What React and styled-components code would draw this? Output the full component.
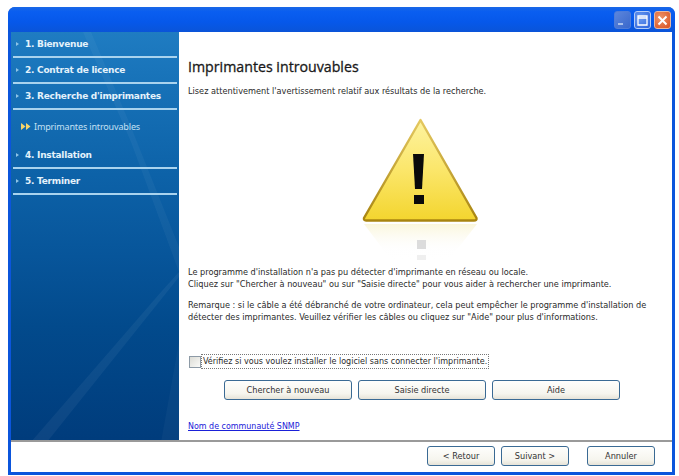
import styled, { createGlobalStyle } from 'styled-components';

const Global = createGlobalStyle`
  html, body { margin: 0; padding: 0; background: #fff; }
  body { font-family: 'Liberation Sans', Arial, sans-serif; }
`

const Window = styled.div`
  width: 667px;
  height: 468px;
  margin: 7px 0 0 8px;
  display: flex;
  flex-direction: column;
  box-sizing: border-box;
  background: #0b55dc;
  border-radius: 7px 7px 0 0;
  padding: 0 3px 3px 3px;
`

const TitleBar = styled.div`
  height: 25px;
  margin: 0 -3px;
  padding: 4px 4px 0 0;
  box-sizing: border-box;
  display: flex;
  justify-content: flex-end;
  gap: 3px;
  border-radius: 7px 7px 0 0;
  background: linear-gradient(180deg, #1a68e6 0%, #0a5ef0 18%, #0658ea 60%, #0a54d8 100%);
`

const CaptionButton = styled.div`
  width: 17px;
  height: 18px;
  box-sizing: border-box;
  border-radius: 3px;
  border: 1px solid ${p => p.$close ? '#e8b8a0' : p.$faded ? '#4f7cd8' : '#b4ccf6'};
  background: ${p => p.$close
    ? 'radial-gradient(circle at 35% 35%, #ee9468, #d8501f)'
    : p.$faded
      ? 'linear-gradient(135deg, #5c86dc, #3a68cc)'
      : 'radial-gradient(circle at 35% 35%, #6c9cf0, #2a62dc)'};
  display: flex;
  align-items: center;
  justify-content: center;
`

const Body = styled.div`
  flex: 1;
  display: flex;
  min-height: 0;
`

const Sidebar = styled.nav`
  position: relative;
  width: 168px;
  flex: none;
  overflow: hidden;
  background: linear-gradient(180deg, #1f7cc2 0%, #1670b6 15%, #0d62a8 35%, #07559a 55%, #024a8c 72%, #003c7c 100%);
`

const Streaks = styled.svg`
  position: absolute;
  left: 0;
  top: 0;
`

const NavItem = styled.div`
  position: relative;
  height: 26px;
  margin: 0 2px;
  padding-left: 12px;
  box-sizing: border-box;
  display: flex;
  align-items: center;
  border-bottom: 2px solid #a9d3ee;
  color: #e4f2fb;
  font-family: 'DejaVu Sans', Verdana, sans-serif;
  font-weight: bold;
  font-size: 9px;
  letter-spacing: -0.25px;
  white-space: nowrap;

  &::before {
    content: '';
    position: absolute;
    left: 3px;
    top: 10px;
    border-left: 3px solid #8fc4e6;
    border-top: 2.5px solid transparent;
    border-bottom: 2.5px solid transparent;
  }
`

const SubItem = styled.div`
  position: relative;
  height: 33px;
  padding-left: 10px;
  display: flex;
  align-items: center;
  gap: 3px;
  color: #c4e0f3;
  font-family: 'Noto Sans', Tahoma, sans-serif;
  font-size: 9px;
  letter-spacing: -0.15px;
  white-space: nowrap;
`

const Main = styled.main`
  flex: 1;
  background: #fff;
  padding: 25px 0 0 9px;
  display: flex;
  flex-direction: column;
  align-items: flex-start;
  color: #2a2a2a;
  font-family: 'DejaVu Sans Condensed', 'Noto Sans', Tahoma, sans-serif;
  font-size: 9.1px;
`

const Title = styled.h1`
  margin: 0;
  font-family: 'Open Sans', Tahoma, sans-serif;
  font-weight: 400;
  font-size: 14.2px;
  line-height: 20px;
  color: #1a1a1a;
  -webkit-text-stroke: 0.3px #1a1a1a;
`

const Lead = styled.p`
  margin: 8px 0 0;
  line-height: 13px;
`

const Art = styled.svg`
  margin: 16px 0 0 167px;
  flex: none;
  display: block;
`

const Paragraph = styled.p`
  margin: ${p => p.$top}px 0 0;
  line-height: 12px;
  white-space: nowrap;
`

const CheckRow = styled.label`
  margin-top: 32px;
  display: flex;
  align-items: center;
  gap: 1px;
  margin-left: 1px;
  font-size: 8.95px;
`

const CheckBox = styled.span`
  width: 12px;
  height: 12px;
  box-sizing: border-box;
  border: 1px solid #8d9aa6;
  background: linear-gradient(135deg, #dcdcd6, #fafaf8);
`

const CheckLabel = styled.span`
  padding: 1px;
  outline: 1px dotted #777;
  line-height: 11px;
`

const ButtonRow = styled.div`
  margin: 12px 0 0 36px;
  display: flex;
  gap: 6px;
`

const Button = styled.button`
  width: ${p => p.$w || 128}px;
  height: 20px;
  padding: 0;
  box-sizing: border-box;
  border: 1px solid #3a6a94;
  border-radius: 3px;
  background: linear-gradient(180deg, #fefefc 0%, #f6f5ee 70%, #e6e3d8 100%);
  color: #333;
  font-family: 'DejaVu Sans Condensed', 'Noto Sans', Tahoma, sans-serif;
  font-size: 9.1px;
`

const Link = styled.a`
  margin-top: 20px;
  color: #1a20d8;
  text-decoration: underline;
  font-size: 8.85px;
  line-height: 12px;
`

const Footer = styled.footer`
  height: 32px;
  flex: none;
  background: #fff;
  border-top: 2px solid #9a9a9a;
  box-sizing: border-box;
  display: flex;
  align-items: center;
  justify-content: flex-end;
  padding: 0 17px 3px 0;
`

const FooterGap = styled.span`
  width: ${p => p.$w}px;
`

const steps = ['1. Bienvenue', '2. Contrat de licence', "3. Recherche d'imprimantes"]
const later = ['4. Installation', '5. Terminer']

function Sky() {
  return (
    <Streaks width="168" height="410" viewBox="0 0 168 410">
      <path d="M72 0 L120 110 L168 240 L168 215 L118 90 L80 0Z" fill="#fff" opacity="0.04" />
      <path d="M20 410 L150 260 L168 240 L168 245 L36 410Z" fill="#fff" opacity="0.05" />
      <path d="M150 410 L168 310 L168 410Z" fill="#fff" opacity="0.03" />
    </Streaks>
  )
}

function Warning() {
  return (
    <Art width="130" height="147" viewBox="355 115 130 147">
      <defs>
        <linearGradient id="fill" x1="0" y1="0" x2="0" y2="1">
          <stop offset="0" stopColor="#fdf3a0" />
          <stop offset="0.5" stopColor="#fbe66a" />
          <stop offset="1" stopColor="#f3d52e" />
        </linearGradient>
        <linearGradient id="edge" x1="0" y1="0" x2="0" y2="1">
          <stop offset="0" stopColor="#e4c860" />
          <stop offset="1" stopColor="#a88410" />
        </linearGradient>
        <linearGradient id="fade" x1="0" y1="0" x2="0" y2="1">
          <stop offset="0" stopColor="#f6eeb8" stopOpacity="0.5" />
          <stop offset="0.7" stopColor="#fafafa" stopOpacity="0.1" />
          <stop offset="1" stopColor="#fff" stopOpacity="0" />
        </linearGradient>
      </defs>
      <path d="M364 225 H477 L448 262 H392Z" fill="url(#fade)" />
      <rect x="417" y="241" width="9" height="9" fill="#dcdcdc" />
      <rect x="417" y="256" width="9" height="5" fill="#efefef" />
      <path d="M420.5 121 L476.5 219 Q477 221.5 474 221.5 H366 Q363.5 221.5 364 219 L420.5 121Z"
        fill="url(#fill)" stroke="url(#edge)" strokeWidth="2.4" strokeLinejoin="round" />
      <path d="M413 155 H424 L422 190 H415Z" fill="#0a0a0a" />
      <rect x="414" y="196" width="10" height="9" fill="#0a0a0a" />
    </Art>
  )
}

function App() {
  return (
    <>
      <Global />
      <Window>
        <TitleBar>
          <CaptionButton $faded>
            <svg width="11" height="11" viewBox="0 0 11 11"><rect x="1" y="8" width="5" height="2" fill="#a8c0ec" /></svg>
          </CaptionButton>
          <CaptionButton>
            <svg width="11" height="11" viewBox="0 0 11 11"><path d="M1 1h9v9H1z M1 1v2h9V1" fill="none" stroke="#fff" strokeWidth="1.3" /></svg>
          </CaptionButton>
          <CaptionButton $close>
            <svg width="11" height="11" viewBox="0 0 11 11"><path d="M1.5 1.5l8 8M9.5 1.5l-8 8" stroke="#fff" strokeWidth="2" /></svg>
          </CaptionButton>
        </TitleBar>
        <Body>
          <Sidebar>
            <Sky />
            {steps.map(s => <NavItem key={s}>{s}</NavItem>)}
            <SubItem>
              <svg width="10" height="7" viewBox="0 0 10 7"><path d="M0 0l4.5 3.5L0 7zM5 0l4.5 3.5L5 7z" fill="#f6d46a" /></svg>
              Imprimantes introuvables
            </SubItem>
            {later.map(s => <NavItem key={s}>{s}</NavItem>)}
          </Sidebar>
          <Main>
            <Title>Imprimantes introuvables</Title>
            <Lead>Lisez attentivement l'avertissement relatif aux résultats de la recherche.</Lead>
            <Warning />
            <Paragraph $top={5}>
              Le programme d'installation n'a pas pu détecter d'imprimante en réseau ou locale.<br />
              Cliquez sur "Chercher à nouveau" ou sur "Saisie directe" pour vous aider à rechercher une imprimante.
            </Paragraph>
            <Paragraph $top={9}>
              Remarque : si le câble a été débranché de votre ordinateur, cela peut empêcher le programme d'installation de<br />
              détecter des imprimantes. Veuillez vérifier les câbles ou cliquez sur "Aide" pour plus d'informations.
            </Paragraph>
            <CheckRow>
              <CheckBox />
              <CheckLabel>Vérifiez si vous voulez installer le logiciel sans connecter l'imprimante.</CheckLabel>
            </CheckRow>
            <ButtonRow>
              <Button>Chercher à nouveau</Button>
              <Button>Saisie directe</Button>
              <Button>Aide</Button>
            </ButtonRow>
            <Link>Nom de communauté SNMP</Link>
          </Main>
        </Body>
        <Footer>
          <Button $w={68}>&lt; Retour</Button>
          <FooterGap $w={6} />
          <Button $w={68}>Suivant &gt;</Button>
          <FooterGap $w={18} />
          <Button $w={68}>Annuler</Button>
        </Footer>
      </Window>
    </>
  );
}

export default App;
